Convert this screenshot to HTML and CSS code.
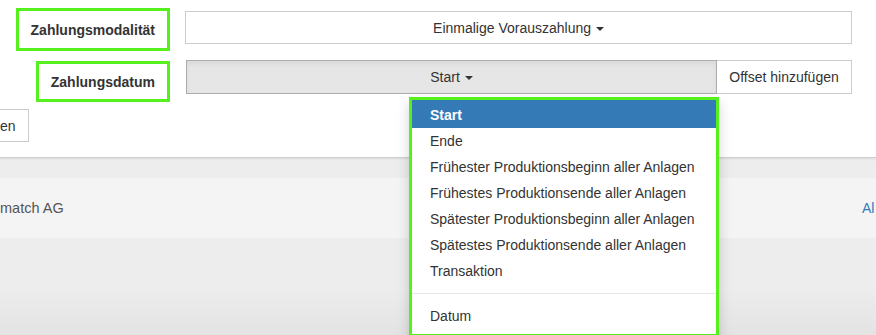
FILE: index.html
```html
<!DOCTYPE html>
<html lang="de">
<head>
<meta charset="utf-8">
<title>Zahlung</title>
<link rel="stylesheet" href="styles.css">
</head>
<body>
<div class="page">
  <section class="form">
    <div class="row row-1">
      <div class="label-col">
        <div class="mark mark-1"><span class="label">Zahlungsmodalität</span></div>
      </div>
      <button class="btn btn-wide">Einmalige Vorauszahlung <span class="caret"></span></button>
    </div>
    <div class="row row-2">
      <div class="label-col">
        <div class="mark mark-2"><span class="label">Zahlungsdatum</span></div>
      </div>
      <div class="btn-group">
        <button class="btn btn-active">Start <span class="caret"></span></button>
        <button class="btn btn-offset">Offset hinzufügen</button>
        <ul class="dropdown">
          <li class="item item-active">Start</li>
          <li class="item">Ende</li>
          <li class="item">Frühester Produktionsbeginn aller Anlagen</li>
          <li class="item">Frühestes Produktionsende aller Anlagen</li>
          <li class="item">Spätester Produktionsbeginn aller Anlagen</li>
          <li class="item">Spätestes Produktionsende aller Anlagen</li>
          <li class="item">Transaktion</li>
          <li class="divider"></li>
          <li class="item">Datum</li>
        </ul>
      </div>
    </div>
    <div class="row row-3">
      <button class="btn btn-cut">en</button>
    </div>
  </section>
  <section class="list">
    <div class="band">
      <span class="company">match AG</span>
      <a class="link">Al</a>
    </div>
  </section>
</div>
</body>
</html>
```
FILE: styles.css
```css
* { box-sizing: border-box; }
html, body {
  margin: 0;
  padding: 0;
  width: 876px;
  height: 335px;
  overflow: hidden;
  background: #ffffff;
}
body {
  font-family: "Liberation Sans", Arial, Helvetica, sans-serif;
  font-size: 14px;
  color: #333333;
}
.page {
  display: flex;
  flex-direction: column;
  height: 335px;
}
.form {
  padding: 8px 24px 15px 0;
  border-bottom: 1px solid #cfcfcf;
  box-shadow: 0 1px 2px rgba(0,0,0,0.08);
  position: relative;
  z-index: 1;
  background: #fff;
}
.row {
  display: flex;
  align-items: flex-start;
}
.label-col {
  width: 170px;
  display: flex;
  justify-content: flex-end;
  flex: none;
}
.mark {
  border: 3px solid #55f01d;
  padding: 0 12px;
  display: flex;
  align-items: center;
}
.mark-1 { height: 43px; }
.mark-2 { height: 41px; margin-top: 1px; }
.label {
  font-weight: bold;
  white-space: nowrap;
}
.btn {
  font-family: inherit;
  font-size: 14px;
  color: #333;
  background: #fff;
  border: 1px solid #ccc;
  height: 34px;
  padding: 6px 12px;
  line-height: 20px;
  white-space: nowrap;
  cursor: pointer;
}
.btn-wide {
  margin-left: 15px;
  margin-top: 3px;
  height: 33px;
  flex: 1;
}
.row-2 { margin-top: 9px; }
.btn-group {
  position: relative;
  margin-left: 16px;
  flex: 1;
  display: flex;
}
.btn-active {
  flex: 1;
  background: #e6e6e6;
  border-color: #adadad;
  box-shadow: inset 0 3px 5px rgba(0,0,0,0.06);
}
.btn-offset {
  width: 135px;
  border-left: none;
}
.caret {
  display: inline-block;
  width: 0;
  height: 0;
  margin-left: 1px;
  vertical-align: middle;
  border-top: 4px solid #333;
  border-left: 4px solid transparent;
  border-right: 4px solid transparent;
}
.dropdown {
  position: absolute;
  left: 223px;
  top: 37px;
  width: 310px;
  margin: 0;
  padding: 2px 0 5px;
  list-style: none;
  background: #fff;
  border: 3px solid #55f01d;
  box-shadow: 0 6px 12px rgba(0,0,0,0.175);
  z-index: 5;
}
.item {
  height: 26px;
  line-height: 20px;
  padding: 3px 18px;
  white-space: nowrap;
  color: #333;
}
.item-active {
  background: #337ab7;
  color: #fff;
  font-weight: bold;
  margin-top: -2px;
  height: 28px;
  padding-top: 5px;
}
.divider {
  height: 1px;
  margin: 9px 0;
  background: #e5e5e5;
}
.row-3 { margin-top: 7px; }
.btn-cut {
  height: 33px;
  border-left: none;
  padding-left: 0;
  padding-right: 12px;
}
.list {
  flex: 1;
  background: linear-gradient(#ededed 0, #ededed 130px, #e3e3e3 177px);
  padding-top: 20px;
}
.band {
  height: 60px;
  background: #f4f4f4;
  display: flex;
  align-items: center;
  justify-content: space-between;
}
.company {
  color: #555;
  font-size: 14.5px;
}
.link {
  color: #337ab7;
  width: 14px;
  overflow: hidden;
  white-space: nowrap;
}
```
